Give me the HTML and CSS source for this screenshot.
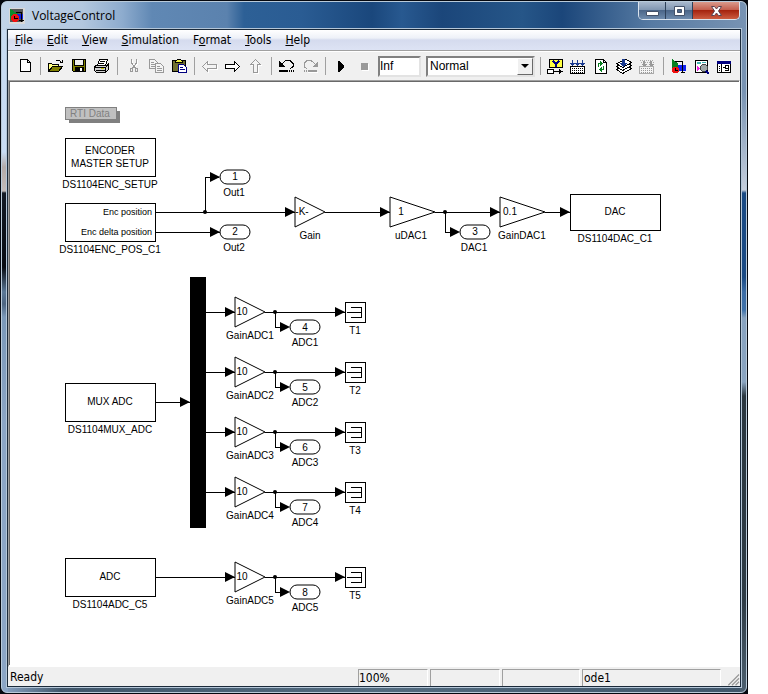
FILE: index.html
```html
<!DOCTYPE html>
<html lang="en">
  <head>
    <meta charset="UTF-8" />
    <meta name="viewport" content="width=device-width, initial-scale=1.0" />
    <title>VoltageControl</title>
    <link rel="stylesheet" href="styles.css">
  </head>
  <body>
    <div class="desktop">
      <div class="window">
        <header class="titlebar">
          <svg class="app-icon" width="16" height="16" viewBox="0 0 16 16" shape-rendering="crispEdges">
            <path fill="#d8d8d8" d="M0 0h16v16H0z" />
            <path fill="#555" d="M1 1h13v13H1z" />
            <path fill="#0b8a2b" d="M1 1l9 5-9 6z" />
            <path fill="#1020e0" d="M8 6h6v5H8z" />
            <circle cx="6" cy="10" r="4" fill="#f01010" />
            <path fill="none" stroke="#000" d="M5.500 8v2.500h3M7 4.500h5.500V14M10 12.500h5" />
          </svg>
          <h1 class="title">VoltageControl</h1>
          <div class="controls">
            <button class="control" aria-label="Minimize">
              <svg width="13" height="12" viewBox="0 0 13 12"><path fill="#fff" stroke="#44526a" d="M.5 6.500h12v4H.5z" /></svg>
            </button>
            <button class="control" aria-label="Maximize">
              <svg width="13" height="12" viewBox="0 0 13 12"><path fill="#fff" fill-rule="evenodd" stroke="#44526a" d="M1.500 1.500h10v9h-10zM4.500 4.500v3h4v-3z" /></svg>
            </button>
            <button class="control control-close" aria-label="Close">
              <svg width="13" height="12" viewBox="0 0 13 12"><path fill="#fff" stroke="#5c4350" d="M1.500 1.500h3l2 2.500 2-2.500h3L8.500 6l3 4.500h-3L6.500 8l-2 2.500h-3l3-4.500z" /></svg>
            </button>
          </div>
        </header>

        <main class="client">
          <nav class="menubar">
            <a href="#"><u>F</u>ile</a>
            <a href="#"><u>E</u>dit</a>
            <a href="#"><u>V</u>iew</a>
            <a href="#"><u>S</u>imulation</a>
            <a href="#">F<u>o</u>rmat</a>
            <a href="#"><u>T</u>ools</a>
            <a href="#"><u>H</u>elp</a>
          </nav>

          <div class="toolbar">
            <button class="tool" aria-label="New">
              <svg viewBox="0 0 17 17"><path fill="#fff" stroke="#000" d="M4.500 1.500h7l3 3v9h-10zM11.500 1.500v3h3" /></svg>
            </button>
            <span class="separator"></span>
            <button class="tool" aria-label="Open">
              <svg viewBox="0 0 17 17">
                <path fill="#ffff80" stroke="#000" d="M1.500 13.500v-8h3l1 1h6v3" />
                <path fill="#808000" stroke="#000" d="M1.500 13.500l4-5h10l-4 5z" />
                <path fill="none" stroke="#000" d="M8.500 3.500l1-1h3l2 2M15.500 1.500v3h-3" />
              </svg>
            </button>
            <button class="tool" aria-label="Save">
              <svg viewBox="0 0 17 17">
                <path fill="#808000" stroke="#000" d="M2.500 1.500h13v12h-12l-1-1z" />
                <path fill="#efefef" stroke="#000" d="M4.500 1.500h9v6h-9z" />
                <path fill="#000" d="M5 9h9v4H5z" />
                <path fill="#fff" d="M10 10h2v3h-2z" />
              </svg>
            </button>
            <button class="tool" aria-label="Print">
              <svg viewBox="0 0 17 17">
                <path fill="#fff" stroke="#000" d="M4.500 7.500l2-6h8l-2 6z" />
                <path fill="none" stroke="#000" d="M7 3.500h5M6 5.500h5" />
                <path fill="#d0d0d0" stroke="#000" d="M1.500 8.500l2-1h10l2-2v6l-3 3h-9l-2-2z" />
                <path fill="none" stroke="#000" d="M1.500 9.500h11l3-3M3 12.500h9M12.500 10v4" />
                <path fill="#c8c800" d="M8 10h3v1H8z" />
              </svg>
            </button>
            <span class="separator"></span>
            <button class="tool" aria-label="Cut">
              <svg viewBox="0 0 17 17">
                <path fill="none" stroke="#fff" d="M8.500 2v4l3 4M13.500 2v4l-3 4" />
                <path fill="none" stroke="#999" d="M7.500 1v4l4 5M12.500 1v4l-4 5" />
                <path fill="none" stroke="#999" d="M6.500 10.500h2v3h-2zM11.500 10.500h2v3h-2z" />
              </svg>
            </button>
            <button class="tool" aria-label="Copy">
              <svg viewBox="0 0 17 17">
                <path fill="#f4f4f4" stroke="#999" d="M2.500 1.500h5l3 3v6h-8z" />
                <path fill="none" stroke="#999" d="M4 4.500h3M4 6.500h4M4 8.500h4" />
                <path fill="#f4f4f4" stroke="#999" d="M8.500 5.500h5l3 3v6h-8z" />
                <path fill="none" stroke="#999" d="M10 8.500h3M10 10.500h5M10 12.500h5" />
              </svg>
            </button>
            <button class="tool" aria-label="Paste">
              <svg viewBox="0 0 17 17">
                <path fill="#707030" stroke="#000" d="M2.500 2.500h13v11h-13z" />
                <path fill="#f0f040" stroke="#000" d="M5.500 3.500l2-2h3l2 2v1h-7z" />
                <path fill="#fff" stroke="#000080" d="M8.500 6.500h5l3 3v5h-8z" />
                <path fill="none" stroke="#000080" d="M10 9.500h3M10 11.500h5" />
              </svg>
            </button>
            <span class="separator"></span>
            <button class="tool" aria-label="Back">
              <svg viewBox="0 0 17 17">
                <path fill="none" stroke="#fff" d="M2.500 9.500l5-5v3h9v4h-9v3z" />
                <path fill="#f4f4f4" stroke="#999" d="M1.500 8.500l5-5v3h9v4h-9v3z" />
              </svg>
            </button>
            <button class="tool" aria-label="Forward">
              <svg viewBox="0 0 17 17"><path fill="#fff" stroke="#000" d="M15.500 8.500l-5-5v3h-9v4h9v3z" /></svg>
            </button>
            <button class="tool" aria-label="Go to parent">
              <svg viewBox="0 0 17 17">
                <path fill="none" stroke="#fff" d="M9.500 2.500l5 5h-3v8h-4v-8h-3z" />
                <path fill="#f4f4f4" stroke="#999" d="M8.500 1.500l5 5h-3v8h-4v-8h-3z" />
              </svg>
            </button>
            <span class="separator"></span>
            <button class="tool" aria-label="Undo">
              <svg viewBox="0 0 17 17">
                <path fill="none" stroke="#000" d="M4 6l2-2 2-1.500h4l3 3v3l-3 2.500" />
                <path fill="#000" d="M1 3v6h6z" />
                <path fill="#000" d="M1 12h9v2H1zM11 12h1v2h-1zM13 12h1v2h-1zM15 12h1v2h-1z" />
              </svg>
            </button>
            <button class="tool" aria-label="Redo">
              <svg viewBox="0 0 17 17">
                <path fill="none" stroke="#999" d="M14 6l-2-2-2-1.500H6l-3 3v3l3 2.500" />
                <path fill="#999" d="M17 3v6h-6z" />
                <path fill="#999" d="M7 12h9v2H7zM5 12h1v2H5zM3 12h1v2H3z" />
                <path fill="#fff" d="M7 14h10v1H7z" />
              </svg>
            </button>
            <span class="separator"></span>
            <button class="tool" aria-label="Start simulation">
              <svg viewBox="0 0 17 17"><path d="M6 3h1l5 5v1l-5 5H6z" /></svg>
            </button>
            <button class="tool" aria-label="Stop simulation">
              <svg viewBox="0 0 17 17"><path fill="#fff" d="M7 6h7v7H7z" /><path fill="#999" d="M6 5h7v7H6z" /></svg>
            </button>
            <input class="stop-time" type="text" value="Inf" aria-label="Stop time">
            <div class="mode">
              <select aria-label="Simulation mode">
                <option>Normal</option>
                <option>Accelerator</option>
                <option>External</option>
              </select>
              <span class="mode-arrow"></span>
            </div>
            <span class="separator"></span>
            <button class="tool" aria-label="Show signal">
              <svg viewBox="0 0 17 17">
                <path fill="#ffff40" stroke="#000" d="M2.500 1.500h13v8h-13z" />
                <path fill="none" stroke="#000080" stroke-width="2" d="M6 3l3 3 3-3M9 5v4" />
                <path fill="#fff" stroke="#000" d="M.5 11.500h6v4h-6z" />
                <path fill="none" stroke="#000" d="M7 13.500h8" /><path d="M12 11l4 2.500-4 2.500z" />
              </svg>
            </button>
            <button class="tool" aria-label="Incremental build">
              <svg viewBox="0 0 17 17">
                <path fill="none" stroke="#1a3a90" d="M2.500 2v5M7.500 2v5M12.500 2v5" />
                <path fill="#1a3a90" d="M0 5h5L2.500 8zM5 5h5L7.500 8zM10 5h5l-2.500 3z" />
                <path fill="#fff" stroke="#000" d="M.5 8.500h14v7H.5z" />
                <path fill="none" stroke="#000" stroke-dasharray="1 1" d="M2 10.500h12M2 12.500h12M2 14.500h12" />
              </svg>
            </button>
            <button class="tool" aria-label="Refresh model">
              <svg viewBox="0 0 17 17">
                <path fill="#fff" stroke="#000" d="M2.500 1.500h8l3 3v11h-11zM10.500 1.500v3h3" />
                <path fill="none" stroke="#088020" d="M5.500 9V5.500h2M10.500 8v3.500h-2" />
                <path fill="#088020" d="M7 3l3 2.500L7 8zM9 9l-3 2.500L9 14z" />
              </svg>
            </button>
            <button class="tool" aria-label="Build subsystem">
              <svg viewBox="0 0 17 17">
                <path fill="#fff" stroke="#000" d="M.5 11.500l6 4 9-5-5-4z" />
                <path fill="#fff" stroke="#000" d="M.5 8.500l6 4 9-5-5-4z" />
                <path fill="#fff" stroke="#000" d="M.5 5.500l6 4 9-5-5-3z" />
                <path fill="#1a3a90" d="M6 1h3v4h2l-3.500 4L4 5h2z" />
              </svg>
            </button>
            <button class="tool" aria-label="Build all">
              <svg viewBox="0 0 17 17">
                <path fill="none" stroke="#aaa" stroke-dasharray="1 1" d="M1 2.500h14M2 4.500h13" />
                <path fill="#999" d="M4 3h2v3h2L5 9 2 6h2zM11 3h2v3h2l-3 3-3-3h2z" />
                <path fill="#f4f4f4" stroke="#aaa" d="M.5 8.500h14v7H.5z" />
                <path fill="none" stroke="#999" stroke-dasharray="1 1" d="M2 10.500h12M2 12.500h12M2 14.500h12" />
              </svg>
            </button>
            <span class="separator"></span>
            <button class="tool" aria-label="Library browser">
              <svg viewBox="0 0 17 17">
                <path fill="#088020" d="M2 1l6 4v6H2z" />
                <path fill="#1020f0" d="M8 7h8v6H8z" />
                <path fill="none" stroke="#000" d="M5 3.500h7.500V15M11 14.500h4" />
                <circle cx="5.500" cy="12" r="3.500" fill="#f01010" />
                <path fill="none" stroke="#000" d="M5.500 10v2.500h2" />
              </svg>
            </button>
            <button class="tool" aria-label="Model explorer">
              <svg viewBox="0 0 17 17">
                <path fill="#fff" stroke="#000" d="M2.500 2.500h12v12h-12z" />
                <path fill="#40b0b0" d="M4 4h4v2H4zM9 4h4v1H9z" />
                <path fill="#f020e0" d="M4 8l3 2.500L4 13z" />
                <circle cx="11" cy="10" r="3.500" fill="#a0a8a8" stroke="#444" />
                <path stroke="#000080" stroke-width="2" d="M13 13l3 3" />
              </svg>
            </button>
            <button class="tool" aria-label="Model browser">
              <svg viewBox="0 0 17 17">
                <path fill="#fff" stroke="#000" d="M1.500 3.500h13v11h-13z" />
                <path fill="#000080" d="M1 3h14v3H1z" />
                <path fill="none" stroke="#000" d="M5.500 6v9M3 8.500h1M3 10.500h1M3 12.500h1M7 9.500h2M9.500 7.500h3v3h-3zM8.500 12.500h4v-2" />
              </svg>
            </button>
          </div>

          <section class="canvas">
            <svg class="diagram" width="100%" height="583">
              <defs>
                <path id="arrow" d="M-10 -5L0 0L-10 5z" />
                <rect id="port" width="30" height="14" rx="7" />
                <path id="gain" d="M0 -15L30 0L0 15z" />
                <path id="wide-gain" d="M0 -15L45 0L0 15z" />
                <!-- gain, outport and terminator, with the origin on the gain input -->
                <g id="adc-channel">
                  <use href="#gain" class="shape" />
                  <path class="wire" d="M30 0H110M40 0V15H50" />
                  <circle cx="40" cy="0" r="2" />
                  <use href="#arrow" x="110" />
                  <use href="#arrow" x="55" y="15" />
                  <use href="#port" x="55" y="8" class="shape" />
                  <path class="line" d="M110 -10h20v20h-20zM116 -5h10v10h-10M112 0h14" />
                  <text x="7" y="3">10</text>
                </g>
              </defs>

              <rect x="59" y="29" width="51" height="12" class="rti-shadow" />
              <rect x="55" y="25" width="51" height="12" class="rti-box" />
              <text x="80" y="35" class="rti-text">RTI Data</text>

              <rect x="55" y="56" width="90" height="38" class="shape" />
              <text x="100" y="72">ENCODER</text>
              <text x="100" y="85">MASTER SETUP</text>
              <text x="100" y="106">DS1104ENC_SETUP</text>

              <rect x="55" y="121" width="90" height="38" class="shape" />
              <text x="142" y="133" class="port-label">Enc position</text>
              <text x="142" y="153" class="port-label">Enc delta position</text>
              <text x="100" y="171">DS1104ENC_POS_C1</text>

              <path class="wire" d="M145 130H285M195 130V95H209M145 150H210" />
              <circle cx="195" cy="130" r="2" />
              <use href="#arrow" x="210" y="95" />
              <use href="#arrow" x="210" y="150" />
              <use href="#arrow" x="285" y="130" />
              <use href="#port" x="210" y="88" class="shape" />
              <text x="225" y="98">1</text>
              <text x="224" y="114">Out1</text>
              <use href="#port" x="210" y="143" class="shape" />
              <text x="225" y="153">2</text>
              <text x="224" y="169">Out2</text>

              <use href="#gain" x="285" y="130" class="shape" />
              <text x="292" y="133">-K-</text>
              <text x="300" y="157">Gain</text>
              <path class="wire" d="M315 130H380" />
              <use href="#arrow" x="380" y="130" />

              <use href="#wide-gain" x="380" y="130" class="shape" />
              <text x="391" y="133">1</text>
              <text x="401" y="157">uDAC1</text>
              <path class="wire" d="M425 130H490M435 130V150H445" />
              <circle cx="435" cy="130" r="2" />
              <use href="#arrow" x="490" y="130" />
              <use href="#arrow" x="450" y="150" />
              <use href="#port" x="450" y="143" class="shape" />
              <text x="465" y="153">3</text>
              <text x="464" y="169">DAC1</text>

              <use href="#wide-gain" x="490" y="130" class="shape" />
              <text x="500" y="133">0.1</text>
              <text x="512" y="157">GainDAC1</text>
              <path class="wire" d="M535 130H560" />
              <use href="#arrow" x="560" y="130" />
              <rect x="560" y="112" width="90" height="36" class="shape" />
              <text x="605" y="133">DAC</text>
              <text x="605" y="160">DS1104DAC_C1</text>

              <rect x="55" y="301" width="90" height="38" class="shape" />
              <text x="100" y="323">MUX ADC</text>
              <text x="100" y="351">DS1104MUX_ADC</text>
              <path class="wire" d="M145 320H180" />
              <use href="#arrow" x="180" y="320" />
              <rect x="180" y="195" width="16" height="251" />

              <path class="wire" d="M195 230H225M195 290H225M195 350H225M195 410H225M145 495H225" />
              <use href="#arrow" x="225" y="230" />
              <use href="#adc-channel" x="225" y="230" />
              <text x="240" y="257">GainADC1</text>
              <text x="295" y="249">4</text>
              <text x="295" y="264">ADC1</text>
              <text x="345" y="252">T1</text>

              <use href="#arrow" x="225" y="290" />
              <use href="#adc-channel" x="225" y="290" />
              <text x="240" y="317">GainADC2</text>
              <text x="295" y="309">5</text>
              <text x="295" y="324">ADC2</text>
              <text x="345" y="312">T2</text>

              <use href="#arrow" x="225" y="350" />
              <use href="#adc-channel" x="225" y="350" />
              <text x="240" y="377">GainADC3</text>
              <text x="295" y="369">6</text>
              <text x="295" y="384">ADC3</text>
              <text x="345" y="372">T3</text>

              <use href="#arrow" x="225" y="410" />
              <use href="#adc-channel" x="225" y="410" />
              <text x="240" y="437">GainADC4</text>
              <text x="295" y="429">7</text>
              <text x="295" y="444">ADC4</text>
              <text x="345" y="432">T4</text>

              <rect x="55" y="476" width="90" height="38" class="shape" />
              <text x="100" y="498">ADC</text>
              <text x="100" y="526">DS1104ADC_C5</text>
              <use href="#arrow" x="225" y="495" />
              <use href="#adc-channel" x="225" y="495" />
              <text x="240" y="522">GainADC5</text>
              <text x="295" y="514">8</text>
              <text x="295" y="529">ADC5</text>
              <text x="345" y="517">T5</text>
            </svg>
          </section>

          <footer class="statusbar">
            <span class="status-text">Ready</span>
            <span class="cell">100%</span>
            <span class="cell"></span>
            <span class="cell cell-time"></span>
            <span class="cell cell-solver">ode1</span>
            <svg class="grip" width="19" height="13" viewBox="0 0 19 13">
              <path stroke="#fff" d="M7 13L19 1M11 13l8-8M15 13l4-4" />
              <path stroke="#999" stroke-width="1.500" d="M6 13L18 1M10 13l8-8M14 13l4-4" />
            </svg>
          </footer>
        </main>
      </div>
    </div>
  </body>
</html>
```

FILE: styles.css
```css
* {
  box-sizing: border-box;
}
body {
  margin: 0;
  padding-right: 20px;
  background-color: #fff;
  color: #000;
  font-family: "DejaVu Sans Condensed", "Noto Sans", sans-serif;
  font-size: 12px;
}
.desktop {
  display: flex;
  min-height: 100vh;
  padding: 1px;
  background-color: #05080f;
}

/* window frame */
.window {
  flex: 1;
  display: flex;
  flex-direction: column;
  min-width: 0;
  padding: 0 5px 5px;
  border: 1px solid #b9cad9;
  border-radius: 6px;
  background:
    linear-gradient(90deg, #c0d3e8 0, #b3c8df 80px, #8eacce 120px, #6088b4 150px, #5b82ae 225px, #2d6096 242px, #2a5c93 300px, #1a477c 370px, #285990 400px, #1b467a 440px, #265688 520px, #1b467a 560px, #577ba3 650px, #7893b3 100%) top / 100% 28px no-repeat,
    linear-gradient(#c6daf0 0, #c8dcf4 150px, #b3aaa8 165px, #c2bbb9 189px, #131a25 191px, #070a10 265px, #5b7896 290px, #4d6581 302px, #7a98b8 315px, #8ba5c5 420px, #8ba5c5 100%) left / 6px 100% no-repeat,
    linear-gradient(#7893b3 0, #7893b3 90px, #c5cedc 188px, #1a4a84 191px, #1a4a84 275px, #3b6ca5 290px, #3f72aa 308px, #87a2bf 316px, #8aa4c0 380px, #2b3740 394px, #2f3c46 600px, #4d6070 100%) right / 6px 100% no-repeat,
    linear-gradient(90deg, #8ba5c5, #40566a 60px, #536b7f 50%, #40566a) #4b6175;
}
.titlebar {
  display: flex;
  align-items: center;
  height: 27px;
  padding-left: 2px;
}
.app-icon {
  margin-right: 7px;
}
.title {
  flex: 1;
  margin: 0;
  font-family: "Open Sans", sans-serif;
  font-size: 12px;
  font-weight: normal;
}
.controls {
  display: flex;
  align-self: flex-start;
  margin-right: 1px;
  border: 1px solid #dbe4ee;
  border-top: 0;
  border-radius: 0 0 5px 5px;
  overflow: hidden;
}
.control {
  display: flex;
  align-items: center;
  justify-content: center;
  width: 27px;
  height: 17px;
  padding: 0;
  border: 0;
  border-right: 1px solid #2d4059;
  background: linear-gradient(#a9b9cd, #8297b2 45%, #4b6689 50%, #6e8bad);
}
.control-close {
  width: 46px;
  border-right: 0;
  background: linear-gradient(#d99a8c, #c4604f 45%, #a5230f 50%, #cc5c41);
}

/* menu and toolbar */
.client {
  flex: 1;
  display: flex;
  flex-direction: column;
  border: 1px solid #1b2a3a;
  background-color: #f0f0f0;
  box-shadow: 0 0 0 1px #b4c6d8;
}
.menubar {
  display: flex;
  height: 21px;
  border-bottom: 1px solid #a0a0a0;
  background: linear-gradient(#fff, #eef1f8 40%, #d5dbee 50%, #dde3f4);
}
.menubar a {
  padding: 0 7px;
  color: #000;
  line-height: 20px;
  text-decoration: none;
}
.toolbar {
  display: flex;
  align-items: center;
  height: 29px;
  padding-left: 5px;
  border-top: 1px solid #fff;
}
.tool {
  flex: none;
  width: 23px;
  height: 22px;
  padding: 0 3px;
  border: 0;
  background: none;
}
.tool svg {
  display: block;
  width: 17px;
  height: 17px;
  shape-rendering: crispEdges;
}
.separator {
  flex: none;
  width: 1px;
  height: 18px;
  margin: 0 3px 0 4px;
  background-color: #a0a0a0;
}
.stop-time,
.mode {
  height: 21px;
  font-family: "Liberation Sans", Arial, sans-serif;
  font-size: 12px;
}
.stop-time {
  width: 43px;
  margin: 0 5px 0 3px;
  padding: 0;
  border: 2px solid;
  border-color: #808080 #e3e3e3 #e3e3e3 #808080;
  background-color: #fff;
}
.mode {
  position: relative;
  width: 109px;
  margin-right: 1px;
}
.mode select {
  width: 100%;
  height: 100%;
  padding: 0 2px;
  border: 2px solid;
  border-color: #808080 #e3e3e3 #e3e3e3 #808080;
  border-radius: 0;
  background-color: #fff;
  color: #000;
  font: inherit;
  appearance: none;
}
.mode-arrow {
  position: absolute;
  top: 2px;
  right: 2px;
  display: flex;
  align-items: center;
  justify-content: center;
  width: 16px;
  height: 17px;
  border: 1px solid;
  border-color: #fff #696969 #696969 #fff;
  background-color: #f0f0f0;
  pointer-events: none;
}
.mode-arrow::before {
  content: "";
  border: 4px solid transparent;
  border-top-color: #000;
  border-bottom: 0;
}

/* model canvas */
.canvas {
  flex: 1;
  overflow: hidden;
  border: 1px solid;
  border-color: #a0a0a0 #fff #fff #a0a0a0;
  background-color: #fff;
}
.diagram {
  display: block;
  box-sizing: content-box;
  border-top: 1px solid #696969;
  border-left: 1px solid #696969;
  font-family: "Liberation Sans", Arial, sans-serif;
  font-size: 10px;
}
.diagram text {
  text-anchor: middle;
}
.diagram .port-label {
  font-size: 9px;
  text-anchor: end;
}
.shape,
.line,
.wire {
  fill: none;
  stroke: #000;
}
.line,
.wire,
rect.shape {
  shape-rendering: crispEdges;
}
.rti-shadow {
  fill: #808080;
}
.rti-box {
  fill: #c0c0c0;
  stroke: #808080;
  shape-rendering: crispEdges;
}
.rti-text {
  fill: #808080;
}

/* status bar */
.statusbar {
  display: flex;
  gap: 2px;
  height: 19px;
  padding-top: 2px;
}
.status-text {
  flex: 1;
  padding-left: 2px;
  line-height: 17px;
}
.cell {
  width: 70px;
  border-top: 1px solid #a0a0a0;
  border-left: 1px solid #a0a0a0;
  border-right: 1px solid #fff;
  line-height: 17px;
}
.cell-time {
  width: 78px;
}
.cell-solver {
  width: 139px;
  padding-left: 1px;
}
.grip {
  align-self: flex-end;
  width: 17px;
}
```
